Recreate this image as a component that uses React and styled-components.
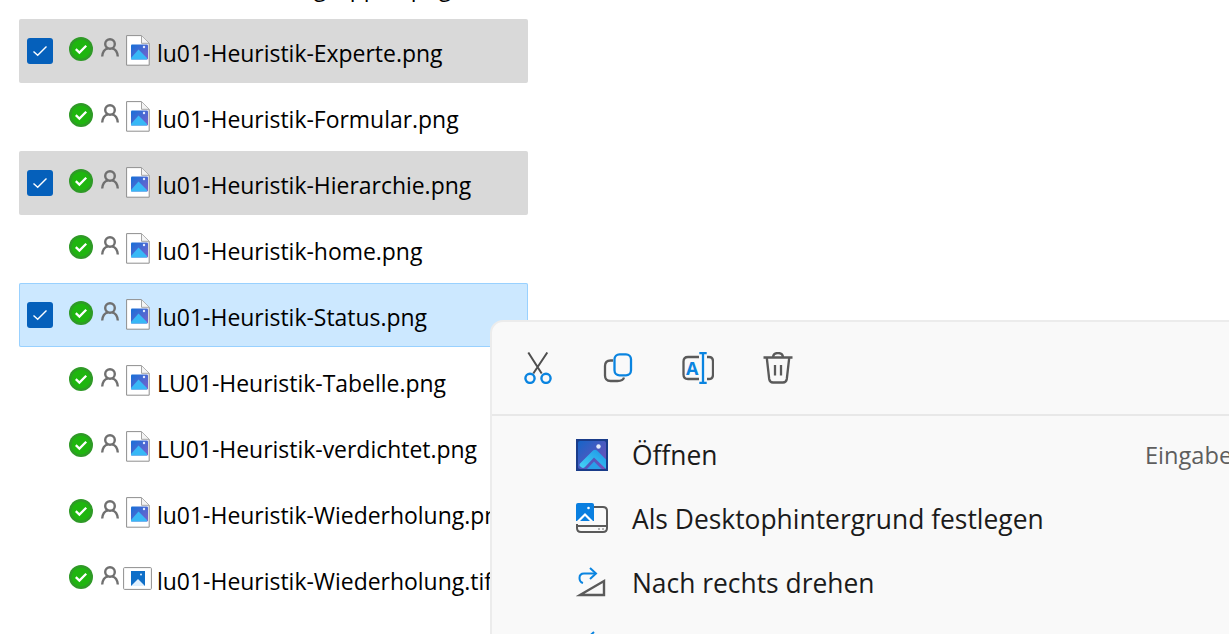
import React from "react";
import styled, { createGlobalStyle } from "styled-components";

const Global = createGlobalStyle`
  html, body { margin: 0; padding: 0; background: #fff; overflow: hidden; }
  body { width: 1229px; height: 634px; font-family: "Open Sans", "Noto Sans", sans-serif; }
`;
const Page = styled.div`
  position: relative; width: 1229px; height: 634px; overflow: hidden; background: #fff;
`;
const List = styled.ul`
  list-style: none; margin: -47px 0 0 19px; padding: 0; width: 509px;
  display: flex; flex-direction: column; gap: 2px;
`;
const Row = styled.li`
  box-sizing: border-box; height: 64px; display: flex; align-items: center;
  padding-left: 8px; border-radius: 2px;
  background: ${p => p.$state === "gray" ? "#d9d9d9" : p.$state === "blue" ? "#cce8ff" : "transparent"};
  box-shadow: ${p => p.$state === "blue" ? "inset 0 0 0 1px #99d1ff" : "none"};
`;
const Check = styled.span`
  width: 26px; height: 26px; flex: none; border-radius: 3px; background: #0560bb;
  display: flex; align-items: center; justify-content: center;
  visibility: ${p => p.$on ? "visible" : "hidden"};
`;
const Status = styled.svg`
  width: 24px; height: 24px; flex: none; margin: -4px 0 0 16px;
`;
const Person = styled.svg`
  width: 18px; height: 19px; flex: none; margin: -8px 0 0 8px;
`;
const FileSlot = styled.span`
  width: 32px; flex: none; margin-left: 3px; display: flex; justify-content: center;
  svg { display: block; margin: -2px 0 0 -1px; }
`;
const Name = styled.span`
  font-size: 22.95px; color: #000; margin-left: 3px; white-space: nowrap; line-height: 30px; margin-top: 3px;
`;
const Menu = styled.div`
  position: absolute; left: 490px; top: 320px; width: 900px; height: 500px; box-sizing: border-box;
  background: #f9f9f9; border: 2px solid #ececec; border-radius: 13px;
`;
const Toolbar = styled.div`
  height: 94px; box-sizing: border-box; border-bottom: 2px solid #e8e8e8;
  display: flex; align-items: center; gap: 48px; padding: 0 0 0 30px;
  svg { width: 32px; height: 32px; flex: none; }
`;
const Items = styled.div` padding-top: 7px; `;
const Item = styled.div`
  height: 64px; display: flex; align-items: center; padding-left: 84px; position: relative;
`;
const ItemIcon = styled.svg` width: 32px; height: 32px; flex: none; `;
const ItemLabel = styled.span`
  margin-left: 24px; font-size: 26.4px; color: #1b1b1b; white-space: nowrap;
`;
const Shortcut = styled.span`
  position: absolute; left: 653px; font-size: 23.6px; color: #5e5e5e; white-space: nowrap;
`;

const CheckMark = () => (
  <svg width="16" height="12" viewBox="0 0 16 12" fill="none">
    <path d="M1.5 6.5 L5.7 10.3 L14.5 1.5" stroke="#fff" strokeWidth="1.4" />
  </svg>
);
const StatusIcon = () => (
  <Status viewBox="0 0 24 24">
    <circle cx="12" cy="12" r="12" fill="#2f9a27" />
    <circle cx="12" cy="12" r="9.6" fill="#1fb50f" />
    <path d="M6.8 12.2 L10.4 15.6 L17.2 8.8" fill="none" stroke="#fff" strokeWidth="2.3" />
  </Status>
);
const PersonIcon = () => (
  <Person viewBox="0 0 18 19" fill="none" stroke="#707070" strokeWidth="2.4">
    <circle cx="9" cy="6" r="4.8" />
    <path d="M1.2 18.5 C1.6 13.5 4.5 11 6.8 10.4 M16.8 18.5 C16.4 13.5 13.5 11 11.2 10.4" />
  </Person>
);
const FileIcon = ({ id }) => (
  <svg width="24" height="31" viewBox="0 0 24 31">
    <defs>
      <linearGradient id={id} x1="0" y1="0" x2="1" y2="1">
        <stop offset="0" stopColor="#1570d8" /><stop offset="1" stopColor="#7d62cc" />
      </linearGradient>
    </defs>
    <path d="M.6 .6 H15.5 L23.2 8.3 V30.2 H.6 Z" fill="#fff" stroke="#8f8f8f" strokeWidth="1" />
    <path d="M15.5 .8 V8.3 H23" fill="#f4f4f4" stroke="#a5a5a5" strokeWidth="1" />
    <rect x="5" y="9.5" width="17" height="15" rx="1" fill={`url(#${id})`} />
    <path d="M5 23 L12.5 14.5 L21 23 L21 24.5 H5 Z" fill="#38b8f6" />
    <circle cx="18" cy="12" r="1.2" fill="#e4ecff" />
  </svg>
);
const ImageFileIcon = () => (
  <svg width="29" height="23" viewBox="0 0 29 23" style={{ margin: "-2px 0 0 -1px" }}>
    <rect x=".6" y=".6" width="27.8" height="21.8" rx="1" fill="#fff" stroke="#8f8f8f" strokeWidth="1" />
    <rect x="8" y="4" width="14" height="15" fill="#0f6fc8" />
    <path d="M8 19 L15 12 L22 19 Z" fill="#dff0ff" />
    <circle cx="18" cy="7.5" r="1" fill="#dfefff" />
  </svg>
);

const files = [
  ["lu01-Heuristik-gruppen.png", ""],
  ["lu01-Heuristik-Experte.png", "gray"],
  ["lu01-Heuristik-Formular.png", ""],
  ["lu01-Heuristik-Hierarchie.png", "gray"],
  ["lu01-Heuristik-home.png", ""],
  ["lu01-Heuristik-Status.png", "blue"],
  ["LU01-Heuristik-Tabelle.png", ""],
  ["LU01-Heuristik-verdichtet.png", ""],
  ["lu01-Heuristik-Wiederholung.png", ""],
  ["lu01-Heuristik-Wiederholung.tif", "", true],
];

export default function App() {
  return (
    <Page>
      <Global />
      <List>
        {files.map(([name, state, tif], i) => (
          <Row key={name} $state={state}>
            <Check $on={!!state}><CheckMark /></Check>
            <StatusIcon />
            <PersonIcon />
            <FileSlot>{tif ? <ImageFileIcon /> : <FileIcon id={`g${i}`} />}</FileSlot>
            <Name>{name}</Name>
          </Row>
        ))}
      </List>
      <Menu>
        <Toolbar>
          <svg viewBox="0 0 32 32" fill="none">
            <path d="M6.3 .5 L19.7 21.5 M25.3 .5 L11.3 21.5" stroke="#4f4f4f" strokeWidth="2" />
            <circle cx="8" cy="26.3" r="4.6" stroke="#0a84e0" strokeWidth="2.4" />
            <circle cx="24" cy="26.3" r="4.6" stroke="#0a84e0" strokeWidth="2.4" />
          </svg>
          <svg viewBox="0 0 32 32" fill="none" strokeWidth="2.3">
            <path d="M11 8.5 H8.5 Q3 8.5 3 14 V23.5 Q3 29 8.5 29 H15.5 Q21 29 22 25.5" stroke="#5a5a5a" />
            <rect x="12.5" y="2.3" width="16.5" height="21" rx="5" stroke="#0a84e0" />
          </svg>
          <svg viewBox="0 0 32 32" fill="none" strokeWidth="2.3">
            <path d="M17 5 H6 Q1.5 5 1.5 9.5 V22.5 Q1.5 27 6 27 H17 M25 5 H27 Q31 5 31 9.5 V22.5 Q31 27 27 27 H25" stroke="#5a5a5a" />
            <path d="M21 1 V31 M17.3 1 H24.7 M17.3 31 H24.7" stroke="#0a84e0" />
            <text x="10.3" y="22.5" textAnchor="middle" fontFamily="Open Sans, sans-serif" fontWeight="700" fontSize="18" fill="#0a84e0" stroke="none">A</text>
          </svg>
          <svg viewBox="0 0 32 32" fill="none" strokeWidth="2.3" stroke="#5a5a5a">
            <path d="M1.5 5.5 H30.5 M11 5.5 Q11 1 16 1 Q21 1 21 5.5 M4.8 6 L7.2 27 Q7.8 30.5 11 30.5 H21 Q24.2 30.5 24.8 27 L27.2 6 M13 13 V23.5 M19 13 V23.5" />
          </svg>
        </Toolbar>
        <Items>
          <Item>
            <ItemIcon viewBox="0 0 32 32">
              <defs>
                <linearGradient id="op" x1="0" y1="0" x2="1" y2="1">
                  <stop offset="0" stopColor="#1665c8" /><stop offset="1" stopColor="#7a4fb8" />
                </linearGradient>
                <linearGradient id="op2" x1="0" y1="1" x2="1" y2="0">
                  <stop offset="0" stopColor="#46d4f7" /><stop offset="1" stopColor="#1c95e6" />
                </linearGradient>
              </defs>
              <rect width="32" height="32" fill="#1a3c8a" />
              <rect x="2" y="2" width="28" height="28" rx="2" fill="url(#op)" />
              <path d="M4 24.5 L17 11.5 Q19 10 21 11.5 L30 20.5 V30 L18 18.5 L9 28 Q7 30 5 28 Q2.5 26.5 4 24.5 Z" fill="url(#op2)" />
              <path d="M11 30 L18 22.5 L25.5 30 Z" fill="#2a9fe8" />
              <circle cx="22.5" cy="7.5" r="2.2" fill="#e4ecfa" />
            </ItemIcon>
            <ItemLabel>Öffnen</ItemLabel>
            <Shortcut>Eingabetaste</Shortcut>
          </Item>
          <Item>
            <ItemIcon viewBox="0 0 32 32">
              <path d="M18 4 H27 Q31 4 31 8 V25 Q31 29 27 29 H5 Q1 29 1 25 V21 M1 23 H31" fill="none" stroke="#5a5a5a" strokeWidth="2" />
              <circle cx="23" cy="26" r=".8" fill="#5a5a5a" /><circle cx="27" cy="26" r=".8" fill="#5a5a5a" />
              <path d="M2 0 H16 Q18 0 18 2 V18 H0 V2 Q0 0 2 0 Z" fill="#0a7fe0" />
              <path d="M1 18 L9 10 L17 18 L14 18 L9 13 L4 18 Z" fill="#fff" />
              <circle cx="12.5" cy="5" r="1.3" fill="#fff" />
            </ItemIcon>
            <ItemLabel>Als Desktophintergrund festlegen</ItemLabel>
          </Item>
          <Item>
            <ItemIcon viewBox="0 0 32 32">
              <path d="M19 6.5 H8 Q3.5 6.5 3.5 11 Q3.5 15 7 16" fill="none" stroke="#0a84e0" strokeWidth="2" />
              <path d="M14 1 L20 6.5 L14 12" fill="none" stroke="#0a84e0" strokeWidth="2" />
              <path d="M4 28 L28 14 V28 Z" fill="none" stroke="#5a5a5a" strokeWidth="2.4" />
            </ItemIcon>
            <ItemLabel>Nach rechts drehen</ItemLabel>
          </Item>
          <Item>
            <ItemIcon viewBox="0 0 32 32">
              <path d="M13 6.5 H24 Q28.5 6.5 28.5 11 M18 1 L12 6.5 L18 12" fill="none" stroke="#0a84e0" strokeWidth="2" />
            </ItemIcon>
            <ItemLabel>Nach links drehen</ItemLabel>
          </Item>
        </Items>
      </Menu>
    </Page>
  );
}
